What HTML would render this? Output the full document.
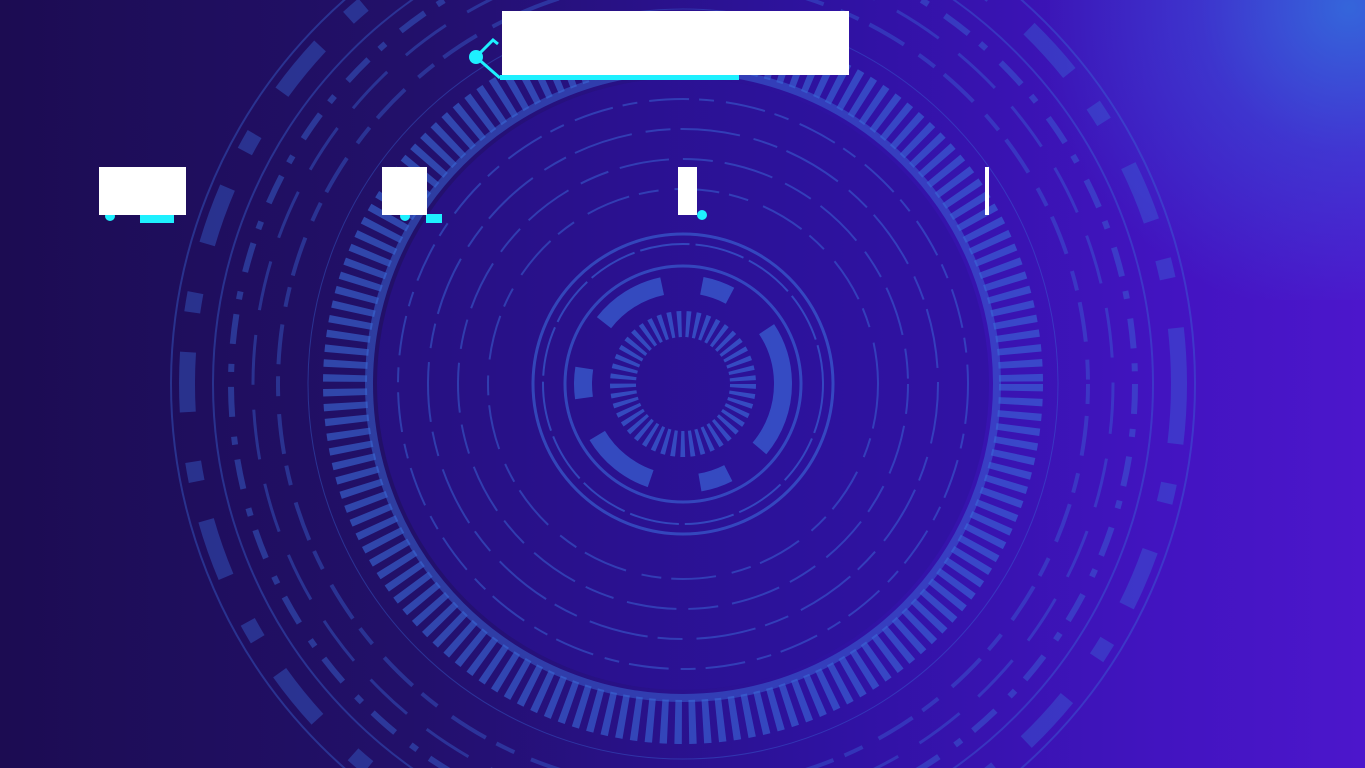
<!DOCTYPE html>
<html><head><meta charset="utf-8"><style>
html,body{margin:0;padding:0;width:1365px;height:768px;overflow:hidden}
body{position:relative;background:linear-gradient(90deg,#1c0c52 0%,#22106a 30%,#2e12a0 60%,#4214c0 85%,#4c16cc 100%);font-family:"Liberation Sans",sans-serif}
.wrap{position:absolute;left:0;top:0;width:1365px;height:768px;overflow:hidden}
.glow{position:absolute;left:1050px;top:-150px;width:315px;height:450px;background:radial-gradient(ellipse at 95% 35%,rgba(50,110,220,0.9) 0%,rgba(50,100,220,0.4) 35%,rgba(60,40,200,0) 75%)}
svg{position:absolute;left:0;top:0}
.w{position:absolute;background:#fff}
.c{position:absolute;background:#1ef0ff}
</style></head><body><div class="wrap">
<div class="glow"></div>
<svg width="1365" height="768" viewBox="0 0 1365 768">
<g fill="none" stroke="#3a6ad8" transform="translate(683,384)">
 <circle r="512" stroke-width="2" opacity="0.4"/>
 <circle r="496" stroke-width="16" stroke-dasharray="60 40 20 50" opacity="0.4"/>
 <circle r="470" stroke-width="2" opacity="0.4"/>
 <circle r="452" stroke-width="6" stroke-dasharray="30 15 8 20" opacity="0.45"/>
 <circle r="430" stroke-width="3" stroke-dasharray="50 25" opacity="0.4"/>
 <circle r="405" stroke-width="4" stroke-dasharray="20 12 40 18" opacity="0.4"/>
 <circle r="375" stroke-width="1" opacity="0.4"/>
 <circle r="338" stroke-width="44" stroke-dasharray="7 7" opacity="0.6"/>
 <circle r="314" stroke-width="8" opacity="0.5"/>
 <circle r="306" fill="#2c129a" stroke="none" opacity="0.5"/>
 <circle r="285" stroke-width="2" stroke-dasharray="40 10 15 12" opacity="0.5"/>
 <circle r="255" stroke-width="2" stroke-dasharray="60 14 25 10" opacity="0.5"/>
 <circle r="225" stroke-width="2" stroke-dasharray="30 12 50 14" opacity="0.5"/>
 <circle r="195" stroke-width="2" stroke-dasharray="45 10 20 16" opacity="0.5"/>
 <circle r="150" stroke-width="3" opacity="0.6"/>
 <circle r="140" stroke-width="2" stroke-dasharray="50 6" opacity="0.6"/>
 <circle r="118" stroke-width="3" opacity="0.6"/>
 <circle r="100" stroke-width="18" stroke-dasharray="70 40 30 50" opacity="0.65"/>
 <circle r="60" stroke-width="26" stroke-dasharray="4 4.4" opacity="0.65"/>
</g>
</svg>
<div class="c" style="left:500px;top:75px;width:239px;height:5px"></div>
<svg width="1365" height="768"><g stroke="#1ef0ff" stroke-width="3" fill="none"><polyline points="476,57 500,78"/><polyline points="476,57 493,40 498,44"/></g><circle cx="476" cy="57" r="7" fill="#1ef0ff"/>
<circle cx="110" cy="216" r="5" fill="#1ef0ff"/><circle cx="405" cy="216" r="5" fill="#1ef0ff"/><circle cx="702" cy="215" r="5" fill="#1ef0ff"/></svg>
<div class="w" style="left:502px;top:11px;width:347px;height:64px"></div>
<div class="c" style="left:140px;top:214px;width:34px;height:9px"></div>
<div class="w" style="left:99px;top:167px;width:87px;height:48px"></div>
<div class="c" style="left:426px;top:214px;width:16px;height:9px"></div>
<div class="w" style="left:382px;top:167px;width:45px;height:48px"></div>
<div class="w" style="left:678px;top:167px;width:19px;height:48px"></div>
<div class="w" style="left:985px;top:167px;width:4px;height:48px"></div>
</div></body></html>
